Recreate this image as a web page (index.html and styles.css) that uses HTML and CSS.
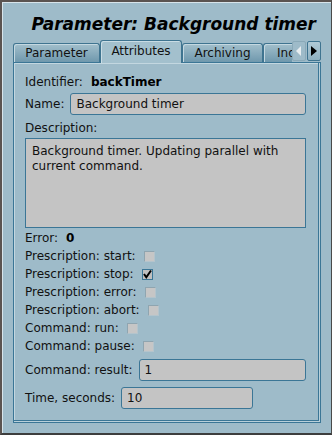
FILE: index.html
```html
<!DOCTYPE html>
<html>
<head>
<meta charset="utf-8">
<link rel="stylesheet" href="styles.css">
</head>
<body>
<div class="window">
  <h1 class="title">Parameter: Background timer</h1>
  <div class="tabbar">
    <div class="tab">Parameter</div>
    <div class="tab active">Attributes</div>
    <div class="tab">Archiving</div>
    <div class="tab clip">Ind</div>
    <div class="arrow disabled"><svg width="6" height="10" viewBox="0 0 6 10"><path d="M5 0 L0 5 L5 10 Z" fill="#e8eef1"/></svg></div>
    <div class="arrow"><svg width="6" height="10" viewBox="0 0 6 10"><path d="M0 0 L6 5 L0 10 Z" fill="#000"/></svg></div>
  </div>
  <div class="panel">
    <div class="row ident"><span>Identifier:</span><b class="val">backTimer</b></div>
    <div class="row"><span>Name:</span><div class="field grow">Background timer</div></div>
    <div class="row lbl">Description:</div>
    <div class="area">Background timer. Updating parallel with current command.</div>
    <div class="row err"><span>Error:</span><b class="val">0</b></div>
    <div class="crow"><span>Prescription: start:</span><span class="cb"></span></div>
    <div class="crow"><span>Prescription: stop:</span><span class="cb on"><svg width="11" height="11" viewBox="0 0 11 11"><path d="M2 5 L4.3 8.3 L9 1.5" fill="none" stroke="#000" stroke-width="2"/></svg></span></div>
    <div class="crow"><span>Prescription: error:</span><span class="cb"></span></div>
    <div class="crow"><span>Prescription: abort:</span><span class="cb"></span></div>
    <div class="crow"><span>Command: run:</span><span class="cb"></span></div>
    <div class="crow"><span>Command: pause:</span><span class="cb"></span></div>
    <div class="row res"><span>Command: result:</span><div class="field grow">1</div></div>
    <div class="row tm"><span>Time, seconds:</span><div class="field short">10</div></div>
  </div>
</div>
</body>
</html>
```
FILE: styles.css
```css
html, body {
  margin: 0;
  padding: 0;
  background: #9ebbc9;
}
body {
  font-family: "DejaVu Sans", sans-serif;
  font-size: 12px;
  color: #111;
}
.window {
  box-sizing: border-box;
  width: 332px;
  height: 435px;
  border-top: 2px solid #5a5350;
  border-left: 2px solid #5a5350;
  border-right: 1px solid #4a4a4a;
  border-bottom: 2px solid #3d3d3d;
  box-shadow: inset 1px 1px 0 #d7e4ea;
  padding: 0 10px 10px 11px;
  display: flex;
  flex-direction: column;
}
.title {
  margin: 0;
  font-size: 17px;
  font-weight: bold;
  font-style: italic;
  text-align: right;
  padding: 12px 5px 0 0;
  height: 26px;
  line-height: 21px;
  color: #000;
}
.tabbar {
  display: flex;
  align-items: flex-end;
  height: 22px;
  position: relative;
  z-index: 1;
}
.tab {
  box-sizing: border-box;
  height: 19px;
  width: 87px;
  border: 1px solid #3f7490;
  border-bottom: none;
  border-radius: 3px 3px 0 0;
  background: linear-gradient(#a2bfcc, #6f98ad);
  box-shadow: inset 1px 1px 0 #c4d8e1;
  text-align: center;
  font-size: 12px;
  line-height: 18px;
  color: #111;
}
.tab:nth-child(2) { width: 82px; }
.tab:nth-child(3) { width: 81px; }
.tab.active {
  background: #a3c0cd;
  box-shadow: inset 1px 1px 0 #c9dce4;
  line-height: 20px;
  margin-bottom: -1px;
  height: 23px;
}
.tab.clip {
  width: 29px;
  overflow: hidden;
  white-space: nowrap;
  text-align: left;
  padding-left: 13px;
  border-right: none;
  border-radius: 3px 0 0 0;
}
.arrow {
  box-sizing: border-box;
  width: 14px;
  height: 20px;
  margin-bottom: 1px;
  border: 1px solid #3f7490;
  border-radius: 2px;
  background: linear-gradient(#b0cad6, #8fb1c1);
  display: flex;
  align-items: center;
  justify-content: center;
}
.arrow.disabled {
  background: #9ebbc9;
  border-color: #8aa9b8;
}
.arrow + .arrow { margin-left: 1px; }
.panel {
  flex: 1;
  box-sizing: border-box;
  border: 1px solid #3b7696;
  box-shadow: inset -1px -1px 0 #b9d0da, inset -2px -2px 0 #3b7696, inset 1px 1px 0 #c3d7e0;
  padding: 8px 14px 0 11px;
  display: flex;
  flex-direction: column;
}
.row {
  display: flex;
  align-items: center;
  height: 22px;
}
.row span { margin-right: 6px; white-space: nowrap; }
.row .val { margin-left: 2px; font-weight: bold; color: #000; }
.row.lbl { height: 18px; margin-top: 4px; }
.field {
  box-sizing: border-box;
  height: 22px;
  border: 1px solid #3b7696;
  border-radius: 3px;
  background: #c4c4c4;
  padding: 0 5px;
  line-height: 20px;
  color: #111;
}
.grow { flex: 1; }
.short { width: 132px; }
.area {
  box-sizing: border-box;
  height: 90px;
  margin-top: 1px;
  border: 1px solid #3b7696;
  background: #c4c4c4;
  padding: 5px 6px;
  line-height: 14.5px;
  color: #111;
}
.row.err { height: 18px; margin-top: 1px; }
.crow {
  display: flex;
  align-items: center;
  height: 18px;
}
.crow span:first-child { margin-right: 8px; }
.cb {
  box-sizing: border-box;
  width: 11px;
  height: 11px;
  background: #c6c6c6;
  border-left: 1px solid #8fa5b0;
  border-top: 1px solid #8fa5b0;
  border-right: 1px solid #b4c4cc;
  border-bottom: 1px solid #b4c4cc;
  display: flex;
}
.cb.on {
  border: 1px solid #3b7696;
  background: #c0c0c0;
}
.cb.on svg { margin: -1px; }
.row.res { margin-top: 4px; }
.row.tm { margin-top: 6px; }
```
